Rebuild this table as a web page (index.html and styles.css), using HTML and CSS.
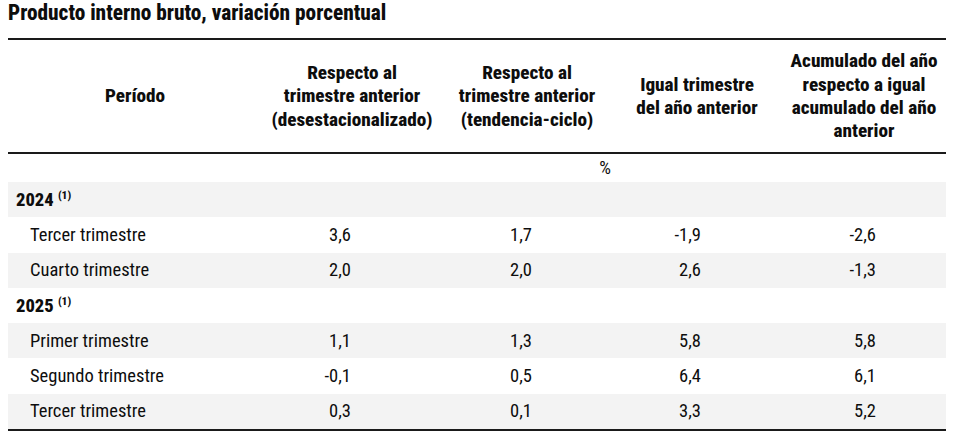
FILE: index.html
```html
<!DOCTYPE html>
<html lang="es">
<head>
<meta charset="utf-8">
<title>Producto interno bruto</title>
<link rel="stylesheet" href="styles.css">
</head>
<body>
<h1 class="title">Producto interno bruto, variación porcentual</h1>
<table class="pib">
  <colgroup>
    <col class="c1"><col class="c2"><col class="c3"><col class="c4"><col class="c5">
  </colgroup>
  <thead>
    <tr class="head">
      <th>Período</th>
      <th>Respecto al<br>trimestre anterior<br>(desestacionalizado)</th>
      <th>Respecto al<br>trimestre anterior<br>(tendencia-ciclo)</th>
      <th>Igual trimestre<br>del año anterior</th>
      <th>Acumulado del año<br>respecto a igual<br>acumulado del año<br>anterior</th>
    </tr>
  </thead>
  <tbody>
    <tr class="unit"><td></td><td></td><td class="pct">%</td><td></td><td></td></tr>
    <tr class="year shade"><td colspan="5">2024 <sup>(1)</sup></td></tr>
    <tr class="data"><td class="lab">Tercer trimestre</td><td class="v2">3,6</td><td class="v3">1,7</td><td class="v4">-1,9</td><td class="v5">-2,6</td></tr>
    <tr class="data shade"><td class="lab">Cuarto trimestre</td><td class="v2">2,0</td><td class="v3">2,0</td><td class="v4">2,6</td><td class="v5">-1,3</td></tr>
    <tr class="year"><td colspan="5">2025 <sup>(1)</sup></td></tr>
    <tr class="data shade"><td class="lab">Primer trimestre</td><td class="v2">1,1</td><td class="v3">1,3</td><td class="v4">5,8</td><td class="v5">5,8</td></tr>
    <tr class="data"><td class="lab">Segundo trimestre</td><td class="v2">-0,1</td><td class="v3">0,5</td><td class="v4">6,4</td><td class="v5">6,1</td></tr>
    <tr class="data shade last"><td class="lab">Tercer trimestre</td><td class="v2">0,3</td><td class="v3">0,1</td><td class="v4">3,3</td><td class="v5">5,2</td></tr>
  </tbody>
</table>
</body>
</html>
```
FILE: styles.css
```css
html, body {
  margin: 0;
  padding: 0;
  background: #ffffff;
}
body {
  padding: 0 8px;
  font-family: Roboto, "Liberation Sans", sans-serif;
  font-stretch: 75%;
  color: #0d0d0d;
}
.title {
  margin: 0;
  padding-top: 1px;
  font-size: 21.3px;
  line-height: 24px;
  font-weight: 800;
}
.pib {
  margin-top: 13px;
  width: 938px;
  border-collapse: collapse;
  table-layout: fixed;
  font-size: 18.5px;
}
.c1 { width: 254px; }
.c2 { width: 180px; }
.c3 { width: 170px; }
.c4 { width: 170px; }
.c5 { width: 164px; }
.head th {
  height: 112px;
  padding: 0;
  border-top: 2.5px solid #1a1a1a;
  border-bottom: 2.5px solid #1a1a1a;
  font-size: 19.2px;
  font-weight: 800;
  line-height: 23.3px;
  text-align: center;
  vertical-align: middle;
  white-space: nowrap;
}
td {
  padding: 0;
  line-height: 20px;
  vertical-align: middle;
}
.unit td {
  height: 28px;
}
.pct {
  text-align: right;
  padding-right: 1px;
}
.year td, .data td {
  height: 35.3px;
}
.shade td {
  background: #f3f3f3;
}
.year td {
  font-weight: 800;
  padding-left: 8px;
}
.year sup {
  font-size: 11.5px;
  vertical-align: 7px;
  line-height: 0;
}
.lab {
  padding-left: 22px;
}
.v2, .v3, .v4, .v5 {
  text-align: right;
}
.v2 { padding-right: 91px; }
.v3 { padding-right: 80px; }
.v4 { padding-right: 81px; }
.v5 { padding-right: 70px; }
.last td {
  border-bottom: 2.5px solid #1a1a1a;
}
```
